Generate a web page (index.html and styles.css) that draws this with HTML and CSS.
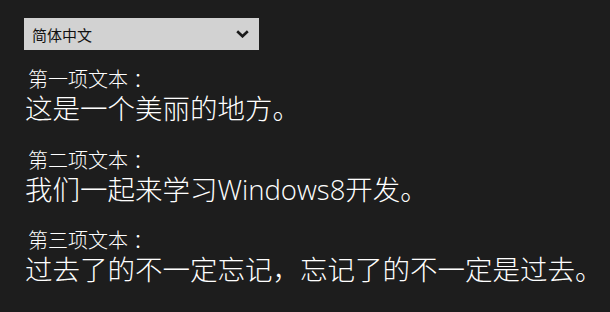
FILE: index.html
```html
<!DOCTYPE html>
<html lang="zh-CN">
<head>
<meta charset="utf-8">
<title>Windows8</title>
<link rel="stylesheet" href="styles.css">
</head>
<body>
<div class="page">
  <div class="combo">
    <span class="combo-text">简体中文</span>
    <svg class="chevron" width="13" height="8" viewBox="0 0 13 8">
      <polyline points="1.2,1.2 6.5,6.3 11.8,1.2" fill="none" stroke="#1a1a1a" stroke-width="2.6" stroke-linecap="butt" stroke-linejoin="miter"/>
    </svg>
  </div>
  <div class="item first">
    <div class="label">第一项文本<span class="colon">：</span></div>
    <div class="value">这是一个美丽的地方。</div>
  </div>
  <div class="item">
    <div class="label">第二项文本<span class="colon">：</span></div>
    <div class="value">我们一起来学习Windows8开发。</div>
  </div>
  <div class="item">
    <div class="label">第三项文本<span class="colon">：</span></div>
    <div class="value">过去了的不一定忘记，忘记了的不一定是过去。</div>
  </div>
</div>
</body>
</html>
```
FILE: styles.css
```css
html, body {
  margin: 0;
  padding: 0;
  background: #1d1d1d;
}
body {
  font-family: "Open Sans", "Noto Sans CJK SC", sans-serif;
  color: #ffffff;
}
.page {
  padding: 18px 0 0 24px;
  display: flex;
  flex-direction: column;
}
.combo {
  width: 235px;
  height: 32px;
  box-sizing: border-box;
  background: #d2d2d2;
  display: flex;
  align-items: center;
  justify-content: space-between;
  padding: 0 10px 0 8px;
}
.combo-text {
  font-family: "Noto Sans CJK SC", sans-serif;
  font-size: 15px;
  line-height: 15px;
  color: #111111;
}
.chevron {
  display: block;
}
.item {
  display: flex;
  flex-direction: column;
  gap: 2px;
  margin-top: 22.5px;
}
.item.first {
  margin-top: 17px;
}
.label {
  font-family: "Noto Sans CJK SC", sans-serif;
  font-weight: 300;
  font-size: 20px;
  line-height: 24px;
  margin-left: 4px;
}
.colon {
  margin-left: 5px;
}
.value {
  font-weight: 300;
  font-size: 27.5px;
  line-height: 32px;
  margin-left: 1px;
  white-space: nowrap;
}
```
